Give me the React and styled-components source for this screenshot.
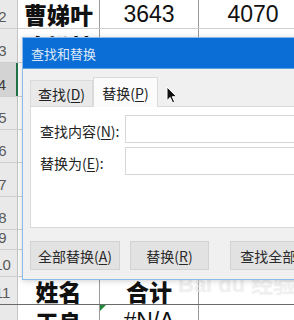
import React from "react";
import styled, { createGlobalStyle } from "styled-components";

const GlobalStyle = createGlobalStyle`
  html, body { margin: 0; padding: 0; background: #fff; overflow: hidden; }
  * { box-sizing: border-box; }
`;

const Page = styled.div`
  position: relative;
  width: 294px;
  height: 320px;
  overflow: hidden;
  background: #fff;
`;

const Sheet = styled.div`
  display: flex;
  flex-direction: column;
  margin-left: -12px;
  width: 320px;
`;

const Row = styled.div`
  display: grid;
  grid-template-columns: 30px 82px 99px 1fr;
  height: ${(p) => p.$h}px;
  border-bottom: 1px solid ${(p) => (p.$dark ? "#6a6a6a" : "#cfcfcf")};
`;

const RowHeader = styled.div`
  display: flex;
  align-items: flex-end;
  justify-content: center;
  padding-bottom: 3px;
  background: ${(p) => (p.$sel ? "#d3d3d3" : "#e9e9e9")};
  border-right: ${(p) => (p.$sel ? "2px solid #217346" : "1px solid #c4c4c4")};
  font-family: "Liberation Sans", Arial, sans-serif;
  font-size: 15px;
  line-height: 16px;
  color: ${(p) => (p.$sel ? "#3a3a3a" : "#5a5a5a")};
`;

const Cell = styled.div`
  position: relative;
  display: flex;
  align-items: center;
  justify-content: center;
  border-right: 1px solid #9a9a9a;
  font-family: ${(p) =>
    p.$num ? `"Liberation Sans", Arial, sans-serif` : `"Noto Sans CJK SC", sans-serif`};
  font-weight: ${(p) => (p.$bold ? 900 : 400)};
  font-size: 23px;
  color: #111;
  white-space: nowrap;
  overflow: hidden;
  ${(p) =>
    p.$flag &&
    `&::before {
      content: "";
      position: absolute;
      left: 0; top: 0;
      border-top: 6px solid #1e8a3a;
      border-right: 6px solid transparent;
    }`}
`;

const Dialog = styled.div`
  position: absolute;
  left: 22px;
  top: 37px;
  width: 290px;
  height: 243px;
  border: 1px solid #8dbbe9;
  background: #f0f0f0;
  box-shadow: 0 1px 6px rgba(0, 0, 0, 0.18);
  display: flex;
  flex-direction: column;
  font-family: "Noto Sans CJK SC", "Liberation Sans", sans-serif;
`;

const TitleBar = styled.div`
  height: 31px;
  flex: none;
  background: #0b6dd6;
  color: #dde9f8;
  font-size: 13px;
  display: flex;
  align-items: center;
  padding-left: 8px;
  border-bottom: 1px solid #5c9ee0;
`;

const Body = styled.div`
  display: flex;
  flex-direction: column;
  padding: 8px 0 8px 7px;
`;

const Tabs = styled.div`
  display: flex;
  align-items: flex-end;
  height: 29px;
`;

const Tab = styled.div`
  height: ${(p) => (p.$active ? 30 : 26)}px;
  width: ${(p) => (p.$active ? 65 : 63)}px;
  margin-bottom: ${(p) => (p.$active ? -1 : 0)}px;
  position: relative;
  z-index: ${(p) => (p.$active ? 1 : 0)};
  background: ${(p) => (p.$active ? "#fbfbfb" : "#e9e9e9")};
  border: 1px solid #dadada;
  border-bottom: none;
  display: flex;
  align-items: center;
  justify-content: center;
  font-size: 14px;
  color: #222;
  u { text-decoration-thickness: 1px; text-underline-offset: 2px; }
`;

const Panel = styled.div`
  height: 122px;
  background: #fff;
  border: 1px solid #dadada;
  border-right: none;
  padding: 8px 0 0 9px;
  display: grid;
  grid-template-columns: 85px 1fr;
  grid-auto-rows: 28px;
  row-gap: 4px;
  align-content: start;
`;

const Label = styled.label`
  display: flex;
  align-items: center;
  font-size: 14px;
  color: #222;
  padding-top: 3px;
  white-space: nowrap;
  u { text-decoration-thickness: 1px; text-underline-offset: 2px; }
`;

const Field = styled.div`
  border: 1px solid #d6d6d6;
  background: #fff;
`;

const Buttons = styled.div`
  display: flex;
  gap: 10px;
  margin-top: 13px;
`;

const Button = styled.div`
  flex: none;
  width: ${(p) => p.$w}px;
  height: 29px;
  margin-left: ${(p) => (p.$spaced ? 11 : 0)}px;
  background: #e2e2e2;
  border: 1px solid #d2d2d2;
  display: flex;
  align-items: center;
  justify-content: center;
  font-size: 14px;
  color: #2a2a2a;
  white-space: nowrap;
  overflow: hidden;
  u { text-decoration-thickness: 1px; text-underline-offset: 2px; }
`;

const Cursor = styled.svg`
  position: absolute;
  left: 166px;
  top: 86px;
`;

const Watermark = styled.div`
  position: absolute;
  left: 178px;
  top: 266px;
  font-family: "Liberation Sans", "Noto Sans CJK SC", sans-serif;
  font-weight: 700;
  font-size: 22px;
  color: rgba(245, 245, 245, 0.55);
  text-shadow: 0 0 1px rgba(170, 170, 170, 0.25);
  white-space: nowrap;
`;

const rows = [
  { n: 2, h: 29, a: "曹娣叶", b: "3643", c: "4070" },
  { n: 3, h: 34, a: "陈松林", b: "", c: "" },
  { n: 4, h: 34, sel: true },
  { n: 5, h: 33 },
  { n: 6, h: 33 },
  { n: 7, h: 34 },
  { n: 8, h: 33 },
  { n: 9, h: 20 },
  { n: 10, h: 27 },
  { n: 11, h: 28, a: "姓名", b: "合计", bBold: true, dark: true },
  { n: 12, h: 34, a: "王良", b: "#N/A", flag: true },
];

export default function App() {
  return (
    <Page>
      <GlobalStyle />
      <Sheet>
        {rows.map((r) => (
          <Row key={r.n} $h={r.h} $dark={r.dark}>
            <RowHeader $sel={r.sel}>{r.n}</RowHeader>
            <Cell $bold>{r.a}</Cell>
            <Cell $num={!r.bBold} $bold={r.bBold} $flag={r.flag}>
              {r.b}
            </Cell>
            <Cell $num>{r.c}</Cell>
          </Row>
        ))}
      </Sheet>

      <Watermark>Bai du 经验</Watermark>

      <Dialog>
        <TitleBar>查找和替换</TitleBar>
        <Body>
          <Tabs>
            <Tab>
              查找(<u>D</u>)
            </Tab>
            <Tab $active>
              替换(<u>P</u>)
            </Tab>
          </Tabs>
          <Panel>
            <Label>
              查找内容(<u>N</u>):
            </Label>
            <Field />
            <Label>
              替换为(<u>E</u>):
            </Label>
            <Field />
          </Panel>
          <Buttons>
            <Button $w={90}>
              全部替换(<u>A</u>)
            </Button>
            <Button $w={79}>
              替换(<u>R</u>)
            </Button>
            <Button $w={90} $spaced>
              查找全部(<u>I</u>)
            </Button>
          </Buttons>
        </Body>
      </Dialog>

      <Cursor width="12" height="18" viewBox="0 0 12 18">
        <path
          d="M1 1 L1 14.5 L4.2 11.4 L6.6 16.8 L8.6 15.9 L6.3 10.7 L10.6 10.7 Z"
          fill="#111"
          stroke="#fff"
          strokeWidth="1"
          strokeLinejoin="round"
        />
      </Cursor>
    </Page>
  );
}
